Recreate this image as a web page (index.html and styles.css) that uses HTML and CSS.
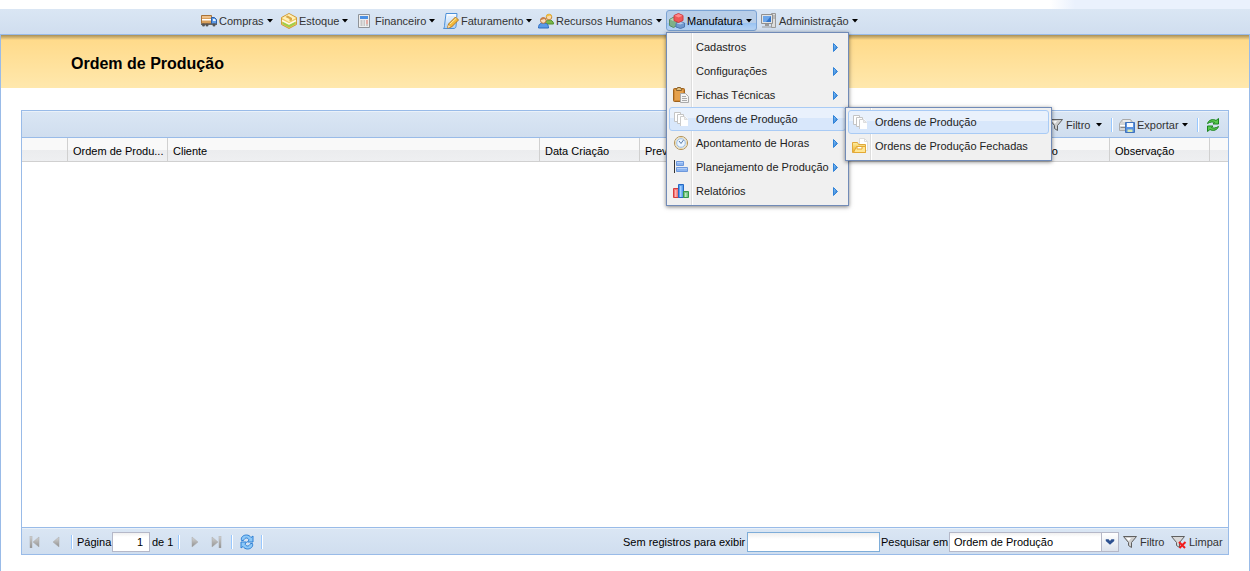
FILE: index.html
```html
<!DOCTYPE html>
<html lang="pt-BR">
<head>
<meta charset="utf-8">
<title>Ordem de Produção</title>
<link rel="stylesheet" href="styles.css">
</head>
<body>
<svg class="sprite" aria-hidden="true">
  <defs>
    <linearGradient id="gold" x1="0" y1="0" x2="0" y2="1"><stop offset="0" stop-color="#fff0a0"/><stop offset="1" stop-color="#e8a828"/></linearGradient>
    <linearGradient id="blue" x1="0" y1="0" x2="1" y2="1"><stop offset="0" stop-color="#8ecbff"/><stop offset="1" stop-color="#1565c0"/></linearGradient>
    <linearGradient id="grey" x1="0" y1="0" x2="0" y2="1"><stop offset="0" stop-color="#d8d8d8"/><stop offset="1" stop-color="#8c8c8c"/></linearGradient>
    <linearGradient id="paper" x1="0" y1="0" x2="0" y2="1"><stop offset="0" stop-color="#ffffff"/><stop offset="1" stop-color="#a8cdf4"/></linearGradient>
    <symbol id="i-pages" viewBox="0 0 16 16">
      <path d="M1.500 1.500h6v9h-6z" fill="#fff" stroke="#c4c4c4"/>
      <path d="M4.500 3.500h6v9h-6z" fill="#fff" stroke="#c4c4c4"/>
      <path d="M7 5h5l3 3v7H7z" fill="#fff"/>
      <path d="M7.500 15V5.500h4" fill="none" stroke="#ccc"/>
      <path d="M11.500 5.500v3h3z" fill="#eee" stroke="#ddd"/>
    </symbol>
    <symbol id="i-funnel" viewBox="0 0 16 16">
      <path d="M1.500 2.500h13L9.500 8.500v5l-3-2v-3z" fill="#d0d0d0" stroke="#606060"/>
      <path d="M4 4h5L6.800 7z" fill="#fff"/>
    </symbol>
    <symbol id="i-arrow" viewBox="0 0 5 9"><path d="M.5.5L4.500 4.500.5 8.500z" fill="url(#blue)" stroke="#3183d8"/></symbol>
    <symbol id="i-caret" viewBox="0 0 6 4"><path d="M0 0h6L3 3.500z" fill="currentColor"/></symbol>
  </defs>
</svg>

<nav class="menubar" aria-label="Principal">
  <ul class="menubar-list">
    <li class="entry w80"><button class="nav-btn" type="button">
      <svg class="icon" viewBox="0 0 16 16"><path d="M.5 2.500h10v8H.5z" fill="#d9a05c" stroke="#a87238"/><path d="M1 3h9v2H1z" fill="#eec08a"/><path d="M1 6h9v1.500H1z" fill="#fff"/><path d="M10.500 4.500h3l2 2v4.500h-5z" fill="#5c9ae6" stroke="#2d5fa8"/><path d="M12 6h2l1 2h-3z" fill="#e4f2ff"/><path d="M0 10.500h16V12H0z" fill="#666"/><g fill="#555"><circle cx="2.500" cy="12" r="1.500"/><circle cx="6" cy="12" r="1.500"/><circle cx="13" cy="12" r="1.500"/></g></svg>
      <span>Compras</span><svg class="caret"><use href="#i-caret"/></svg></button></li>
    <li class="entry w76"><button class="nav-btn" type="button">
      <svg class="icon" viewBox="0 0 16 16"><path d="M8 .5l7.500 4v7L8 15.500.5 11.500v-7z" fill="#f0c860" stroke="#d09c3c"/><path d="M8 1l7 4-7 4-7-4z" fill="#fff0b8"/><path d="M6.500 2.500L11 5v2.500L8.500 8V6L4.500 4z" fill="#d9a848"/><path d="M1.500 8.500L8 12l6.500-3.500V11L8 14.500 1.500 11z" fill="#9fd04a"/><path d="M1 7.500L8 11l7-3.500" fill="none" stroke="#fffbe8" stroke-width="1.500"/></svg>
      <span>Estoque</span><svg class="caret"><use href="#i-caret"/></svg></button></li>
    <li class="entry w86"><button class="nav-btn" type="button">
      <svg class="icon" viewBox="0 0 16 16"><path d="M1.500 1.500h11v13h-11z" fill="#eee" stroke="#8f9398"/><path d="M3 3h8v3H3z" fill="#4c91e4"/><path d="M3.500 8h2M6.500 8h1.500M3.500 10h2M6.500 10h1.500M3.500 12h2M6.500 12h1.500M9 12h2" stroke="#a0a0a0"/><path d="M9 8h2M9 10h2" stroke="#dc6b5c"/></svg>
      <span>Financeiro</span><svg class="caret"><use href="#i-caret"/></svg></button></li>
    <li class="entry w95"><button class="nav-btn" type="button">
      <svg class="icon" viewBox="0 0 16 16"><path d="M3 .5h11l-1 13c-.2 1-1 2-2 2H.5c1-1 1-2 1-3z" fill="url(#paper)" stroke="#4d91d8"/><path d="M5 4h7M5 6h7M4 8h5" stroke="#d5e8fb"/><path d="M5.500 11l7-7 3 3-7 7-4 1z" fill="#f3b93a" stroke="#b27722"/><path d="M7 11l6.500-6" stroke="#fff0a8"/><path d="M4.500 15l1-3 2 2z" fill="#f7dfb8"/></svg>
      <span>Faturamento</span><svg class="caret"><use href="#i-caret"/></svg></button></li>
    <li class="entry w130"><button class="nav-btn" type="button">
      <svg class="icon" viewBox="0 0 16 16"><path d="M7 11c0-3 2-4 4-4s4.500 1 4.500 4z" fill="#7cb84a" stroke="#4f8f2a"/><circle cx="11" cy="4" r="2.800" fill="#fbd9ac" stroke="#c28a3c"/><path d="M8 4c0-4 6-4 6 0l-2-1.500z" fill="#f0c040"/><path d="M.5 15c0-4 2-5 5-5s5 1 5 5z" fill="#5a9ae8" stroke="#2c6cc0"/><circle cx="5.300" cy="7.500" r="2.800" fill="#fbdcb8" stroke="#b9763e"/><path d="M2.300 7.300c0-4 6-4 6 0l-2-1.300z" fill="#c98048"/></svg>
      <span>Recursos Humanos</span><svg class="caret"><use href="#i-caret"/></svg></button></li>
    <li class="entry w91"><button class="nav-btn nav-btn-open" type="button" aria-expanded="true">
      <svg class="icon" viewBox="0 0 16 16"><path d="M.5 6.500L4 4.500l4 2v6l-3.500 2-4-2z" fill="#7fb088" stroke="#588c60"/><path d="M1 6.500l3 1.500 3.500-1.500L4 5z" fill="#b2d6b6"/><path d="M7 10.500l4-2 4.500 1.500v4l-4 1.500-4.500-1.500z" fill="#6f98ce" stroke="#4f78b0"/><path d="M7.500 10.500L11 9l4 1-3.500 1.500z" fill="#b4cdec"/><path d="M5 2.500L9.500.5 14 2.500v5l-4.500 2L5 7.500z" fill="#ee5858" stroke="#d03c40"/><path d="M5.500 2.800L9.500 1l4 1.800-4 1.700z" fill="#ff8c8c"/></svg>
      <span>Manufatura</span><svg class="caret"><use href="#i-caret"/></svg></button>
      <ul class="menu menu-main">
        <li class="menu-item"><span class="icon"></span><span class="menu-text">Cadastros</span><svg class="arrow"><use href="#i-arrow"/></svg></li>
        <li class="menu-item"><span class="icon"></span><span class="menu-text">Configurações</span><svg class="arrow"><use href="#i-arrow"/></svg></li>
        <li class="menu-item"><svg class="icon" viewBox="0 0 16 16"><rect x=".5" y="1.500" width="11" height="13" rx="1" fill="#d18a36" stroke="#a0621c"/><path d="M2 3h8v10H2z" fill="#e5a04c"/><path d="M3.500 2.500L4.500.5h3l1 2v1h-5z" fill="#e0c080" stroke="#89602c"/><path d="M7.500 6.500h5l3 3v6h-8z" fill="#f4f4f4" stroke="#aaa"/><path d="M9 9.500h4M9 11.500h5M9 13.500h5" stroke="#aaa"/></svg><span class="menu-text">Fichas Técnicas</span><svg class="arrow"><use href="#i-arrow"/></svg></li>
        <li class="menu-item menu-item-on"><svg class="icon"><use href="#i-pages"/></svg><span class="menu-text">Ordens de Produção</span><svg class="arrow"><use href="#i-arrow"/></svg>
          <ul class="menu menu-sub">
            <li class="menu-item menu-item-on"><svg class="icon"><use href="#i-pages"/></svg><span class="menu-text">Ordens de Produção</span></li>
            <li class="menu-item"><svg class="icon" viewBox="0 0 16 16"><path d="M7.500.5h5l3 3v9h-8z" fill="#fff" stroke="#ddd"/><path d="M12.500.5v3h3" fill="none" stroke="#ddd"/><path d="M.5 4.500h5l1 2h7v8H.5z" fill="url(#gold)" stroke="#e0a83c"/><path d="M4.500 8.500h9v6h-12z" fill="#ffe694" stroke="#e4a934"/><path d="M5 8.500h5v2.500H5z" fill="#fff" stroke="#e4a934"/></svg><span class="menu-text">Ordens de Produção Fechadas</span></li>
          </ul>
        </li>
        <li class="menu-item"><svg class="icon" viewBox="0 0 16 16"><circle cx="8" cy="8" r="6.600" fill="#d9ebff" stroke="#b89860"/><circle cx="8" cy="8" r="5.500" fill="#edf6ff" stroke="#ecd8a8"/><circle cx="8" cy="8" r="4.300" fill="none" stroke="#9abce4"/><path d="M8 8.500L10.500 5M8 8.500L6 6" stroke="#5b7ca8" fill="none"/></svg><span class="menu-text">Apontamento de Horas</span><svg class="arrow"><use href="#i-arrow"/></svg></li>
        <li class="menu-item"><svg class="icon" viewBox="0 0 16 16"><path d="M1.500 1v13" stroke="#333"/><path d="M3.500 2.500h7v4h-7zM3.500 8.500h11v4h-11z" fill="#8db5f0" stroke="#6d98dc"/><path d="M4 3.500h6M4 9.500h10" stroke="#b4d0fa"/></svg><span class="menu-text">Planejamento de Produção</span><svg class="arrow"><use href="#i-arrow"/></svg></li>
        <li class="menu-item"><svg class="icon" viewBox="0 0 16 16"><path d="M.5 5.500h5v9h-5z" fill="#f07878" stroke="#d63c3c"/><path d="M2 7h1.500v7H2z" fill="#ffb4b4"/><path d="M5.500 1.500h5v13h-5z" fill="#5aa0ee" stroke="#2567c2"/><path d="M7 3h1.500v11H7z" fill="#a6d0ff"/><path d="M10.500 8.500h5v6h-5z" fill="#74c482" stroke="#37994a"/><path d="M12 10h1.500v4H12z" fill="#bdeac0"/></svg><span class="menu-text">Relatórios</span><svg class="arrow"><use href="#i-arrow"/></svg></li>
      </ul>
    </li>
    <li class="entry"><button class="nav-btn" type="button">
      <svg class="icon" viewBox="0 0 16 16"><path d="M10.500.5h4v14h-4z" fill="#ddd" stroke="#999"/><path d="M12 3h2M12 5h2" stroke="#999"/><path d="M.5 1.500h11v9H.5z" fill="#e4e4e4" stroke="#909090"/><path d="M2 3h8v6H2z" fill="#3375ca"/><path d="M2 3h8L5 9H2z" fill="#6da6e8"/><path d="M4 11h4v2H4z" fill="#999"/><path d="M1 14h10" stroke="#999"/></svg>
      <span>Administração</span><svg class="caret"><use href="#i-caret"/></svg></button></li>
  </ul>
</nav>

<main class="page">
  <header class="banner"><h1>Ordem de Produção</h1></header>
  <section class="panel">
    <div class="toolbar">
      <button class="tool tool-filter" type="button"><svg class="icon"><use href="#i-funnel"/></svg><span>Filtro</span><svg class="caret"><use href="#i-caret"/></svg></button>
      <span class="sep"></span>
      <button class="tool tool-export" type="button"><svg class="icon" viewBox="0 0 16 16"><path d="M3.500 2.500h8l3 4v7H.5v-7z" fill="#d4d4d4" stroke="#aaa"/><path d="M4 4h7M1 8.500h6" stroke="#fff"/><path d="M1.500 10.500h5" stroke="#888"/><path d="M6.500 5.500h9v10h-9z" fill="#5a92e0" stroke="#3f72bc"/><path d="M8 6h6v4H8z" fill="#f4f8ff"/><path d="M8.500 12.500h5V15h-5z" fill="#dbeab2"/></svg><span>Exportar</span><svg class="caret"><use href="#i-caret"/></svg></button>
      <span class="sep"></span>
      <button class="tool tool-reload" type="button" aria-label="Atualizar"><svg class="icon" viewBox="0 0 16 16"><g fill="#58c84c" stroke="#1c8420"><path d="M2.500 6.500C3.500 3 8 1.500 11 3.500l2.500-2v5.500H8l1.500-1.500C7.500 4.500 5 5 2.500 6.500z"/><path d="M13.500 9.500c-1 3.500-5.500 5-8.500 3l-2.500 2V9H8l-1.500 1.500c2 1 4.500.5 7-1z"/></g></svg></button>
    </div>
    <div class="grid-body">
      <table class="grid">
        <colgroup><col class="c46"><col class="c100"><col><col class="c100"><col class="c100"><col class="c172"><col class="c98"><col class="c100"><col class="c100"><col class="c18"></colgroup>
        <thead><tr><th></th><th title="Ordem de Produção">Ordem de Produ...</th><th>Cliente</th><th>Data Criação</th><th>Previsão</th><th></th><th></th><th>Situação</th><th>Observação</th><th></th></tr></thead>
      </table>
    </div>
    <footer class="pager">
      <button class="page-btn first" type="button" aria-label="Primeira página"><svg class="glyph" viewBox="0 0 12 12"><path d="M1 0h2v12H1zM10 1v10L4 6z" fill="url(#grey)" stroke="#aaa" stroke-width=".5"/></svg></button>
      <button class="page-btn prev" type="button" aria-label="Página anterior"><svg class="glyph" viewBox="0 0 12 12"><path d="M9 1v10L3 6z" fill="url(#grey)" stroke="#aaa" stroke-width=".5"/></svg></button>
      <span class="sep"></span>
      <label class="page-label" for="pg">Página</label>
      <input class="page-input" id="pg" type="text" value="1">
      <span class="page-total">de 1</span>
      <span class="sep"></span>
      <button class="page-btn next" type="button" aria-label="Próxima página"><svg class="glyph" viewBox="0 0 12 12"><path d="M3 1v10l6-5z" fill="url(#grey)" stroke="#aaa" stroke-width=".5"/></svg></button>
      <button class="page-btn last" type="button" aria-label="Última página"><svg class="glyph" viewBox="0 0 12 12"><path d="M8 0h2v12H8zM1 1v10l6-5z" fill="url(#grey)" stroke="#aaa" stroke-width=".5"/></svg></button>
      <span class="sep"></span>
      <button class="page-btn reload" type="button" aria-label="Recarregar"><svg class="icon" viewBox="0 0 16 16"><g fill="#8cc8f8" stroke="#2f80d4"><path d="M2.500 6.500C1.500 3 4.500 1 7.500 1c2 0 3.500 1 4.500 2.500l2-1.500v6H8.500L10 6C9 3.500 6 3 4.500 6.500z"/><path d="M13.500 9.500c1 3.500-2 5.500-5 5.500-2 0-3.500-1-4.500-2.500L2 14V8h5.500L6 10c1 2.500 4 3 5.500-.5z"/></g></svg></button>
      <span class="sep"></span>
      <div class="search">
        <label class="empty-label" for="q">Sem registros para exibir</label>
        <input class="search-input" id="q" type="text">
        <label class="in-label" for="field">Pesquisar em</label>
        <span class="combo"><select id="field"><option>Ordem de Produção</option></select><svg class="combo-arrow" viewBox="0 0 17 18"><path d="M4 6h3l1.500 2L10 6h3v2l-4.500 4L4 8z" fill="#2c5090"/></svg></span>
        <button class="tool filter-go" type="button"><svg class="icon"><use href="#i-funnel"/></svg><span>Filtro</span></button>
        <button class="tool filter-clear" type="button"><svg class="icon" viewBox="0 0 16 16"><path d="M.5 2.500h13L8.500 8.500v5l-3-2v-3z" fill="#d8d8d8" stroke="#606060"/><path d="M8 8l6 6M14.500 8l-6 6" stroke="#f21b1b" stroke-width="2"/></svg><span>Limpar</span></button>
      </div>
    </footer>
  </section>
</main>
</body>
</html>
```
FILE: styles.css
```css
* { box-sizing: border-box; }

body {
  margin: 0;
  min-height: 100vh;
  display: flex;
  flex-direction: column;
  background: #fff;
  color: #000;
  font: 11px/14px "Liberation Sans", Arial, sans-serif;
}

button, input, select { font: inherit; color: inherit; }
ul { list-style: none; margin: 0; padding: 0; }
.sprite { position: absolute; width: 0; height: 0; }
.icon { width: 16px; height: 16px; flex: none; }

.menubar {
  border-top: 9px solid transparent;
  border-bottom: 1px solid #99bbe8;
  background:
    linear-gradient(#dae6f4, #d0deef) padding-box,
    linear-gradient(90deg, #fff 84%, #eaf1fd 86%) border-box;
}
.menubar-list { display: flex; padding: 1px 0 3px 198px; }
.entry { position: relative; }
.nav-btn {
  display: flex;
  align-items: center;
  gap: 2px;
  height: 21px;
  padding: 1px 2px 0;
  border: 1px solid transparent;
  border-radius: 3px;
  background: none;
  color: #333;
  white-space: nowrap;
}
.nav-btn-open {
  width: 100%;
  color: #000;
  border-color: #7ba3d4;
  background: linear-gradient(#b8cee8 0 12px, #98c2f2 12px, #b8d5f5);
}
.caret { width: 6px; height: 4px; margin-left: 1px; flex: none; color: #000; }
.w76 { width: 76px; }
.w80 { width: 80px; }
.w86 { width: 86px; }
.w91 { width: 91px; margin-right: 1px; }
.w95 { width: 95px; }
.w130 { width: 131px; }

.menu {
  position: absolute;
  z-index: 2;
  padding: 2px;
  border: 1px solid #718bb7;
  background: linear-gradient(90deg, #f0f0f0 24px, #ddd 24px 25px, #fff 25px 26px, #f0f0f0 26px);
  box-shadow: 0 1px 4px rgba(0, 0, 0, .5);
}
.menu-main { top: 22px; left: 0; width: 183px; }
.menu-sub { top: -1px; left: 175px; width: 207px; z-index: 3; }
.menu-item {
  position: relative;
  display: flex;
  align-items: center;
  height: 24px;
  padding: 0 7px 0 3px;
  border: 1px solid transparent;
  border-radius: 3px;
  color: #222;
  white-space: nowrap;
}
.menu-item-on {
  border-color: #a9cbf5;
  background: linear-gradient(#e9f1fc 0 10px, #d8e7fb 10px);
}
.menu-text { flex: 1; margin-left: 7px; }
.arrow { width: 5px; height: 9px; flex: none; }

.page {
  flex: 1;
  display: flex;
  flex-direction: column;
  border: solid #99bbe8;
  border-width: 0 1px;
}
.banner {
  padding: 19px 70px 14px;
  background:
    linear-gradient(rgba(80, 70, 40, .5), rgba(80, 70, 40, 0)) 0 0 / 100% 5px no-repeat,
    linear-gradient(#ffd987, #ffe8ad);
}
.banner h1 { margin: 0; font-size: 16px; line-height: 20px; }

.panel {
  flex: 1;
  display: flex;
  flex-direction: column;
  margin: 22px 20px 16px;
  border: 1px solid #99bbe8;
}
.toolbar, .pager {
  display: flex;
  align-items: center;
  background: linear-gradient(#dae6f4, #d0deef);
  box-shadow: inset 0 1px #eaf1f9;
}
.toolbar {
  justify-content: flex-end;
  height: 27px;
  padding: 2px 7px 0 0;
  border-bottom: 1px solid #99bbe8;
}
.sep { width: 2px; height: 14px; flex: none; border-left: 1px solid #98c8ff; background: #fff; }
.tool {
  display: flex;
  align-items: center;
  gap: 2px;
  padding: 0;
  border: 0;
  background: none;
  color: #333;
}
.tool-filter { width: 63px; }
.tool-filter .caret { margin-left: auto; margin-right: 9px; }
.tool-filter + .sep { margin-right: 6px; }
.tool-export { width: 78px; }
.tool-reload { margin-left: 6px; }

.grid-body { flex: 1; background: #fff; }
.grid { width: 100%; table-layout: fixed; border-collapse: separate; border-spacing: 0; }
.grid th {
  height: 24px;
  padding: 3px 2px 0 5px;
  border-right: 1px solid #d0d0d0;
  border-bottom: 1px solid #d0d0d0;
  background: linear-gradient(#f9f9f9 50%, #ebecee 52%, #eeeff1);
  font-weight: normal;
  text-align: left;
  white-space: nowrap;
}
.grid th:last-child { border-right: 0; }
.c18 { width: 18px; }
.c46 { width: 46px; }
.c98 { width: 98px; }
.c100 { width: 100px; }
.c172 { width: 172px; }

.pager {
  height: 27px;
  padding-top: 1px;
  border-top: 1px solid #99bbe8;
  white-space: nowrap;
}
.page-btn { display: flex; padding: 0; border: 0; background: none; }
.glyph { width: 12px; height: 12px; }
.first { margin-left: 7px; }
.prev { margin: 0 9px; }
.page-label { width: 34px; margin-left: 4px; }
.page-input {
  width: 38px;
  height: 20px;
  margin-left: 1px;
  padding: 0 6px;
  border: 1px solid #b5b8c8;
  background: linear-gradient(#f0f0f0, #fff 4px);
  text-align: right;
}
.page-total { width: 26px; margin-left: 2px; }
.next { margin: 0 10px 0 9px; }
.last { margin-right: 8px; }
.reload { margin: 0 6px; }
.search { display: flex; align-items: center; margin-left: auto; padding-right: 4px; }
.empty-label { width: 124px; }
.search-input {
  width: 133px;
  height: 20px;
  border: 1px solid #7eadd9;
  background: linear-gradient(#eee, #fff 6px);
}
.in-label { width: 68px; margin-left: 1px; }
.combo { position: relative; width: 170px; height: 20px; }
.combo select {
  width: 100%;
  height: 20px;
  padding: 0 20px 0 4px;
  border: 1px solid #b5b8c8;
  border-radius: 0;
  background: linear-gradient(#f0f0f0, #fff 4px);
  appearance: none;
}
.combo-arrow {
  position: absolute;
  top: 1px;
  right: 1px;
  width: 17px;
  height: 18px;
  border-left: 1px solid #b5b8c8;
  background: linear-gradient(#fff, #dde3ec);
  pointer-events: none;
}
.filter-go { width: 46px; margin-left: 3px; }
.filter-clear { width: 53px; margin-left: 3px; }
```
